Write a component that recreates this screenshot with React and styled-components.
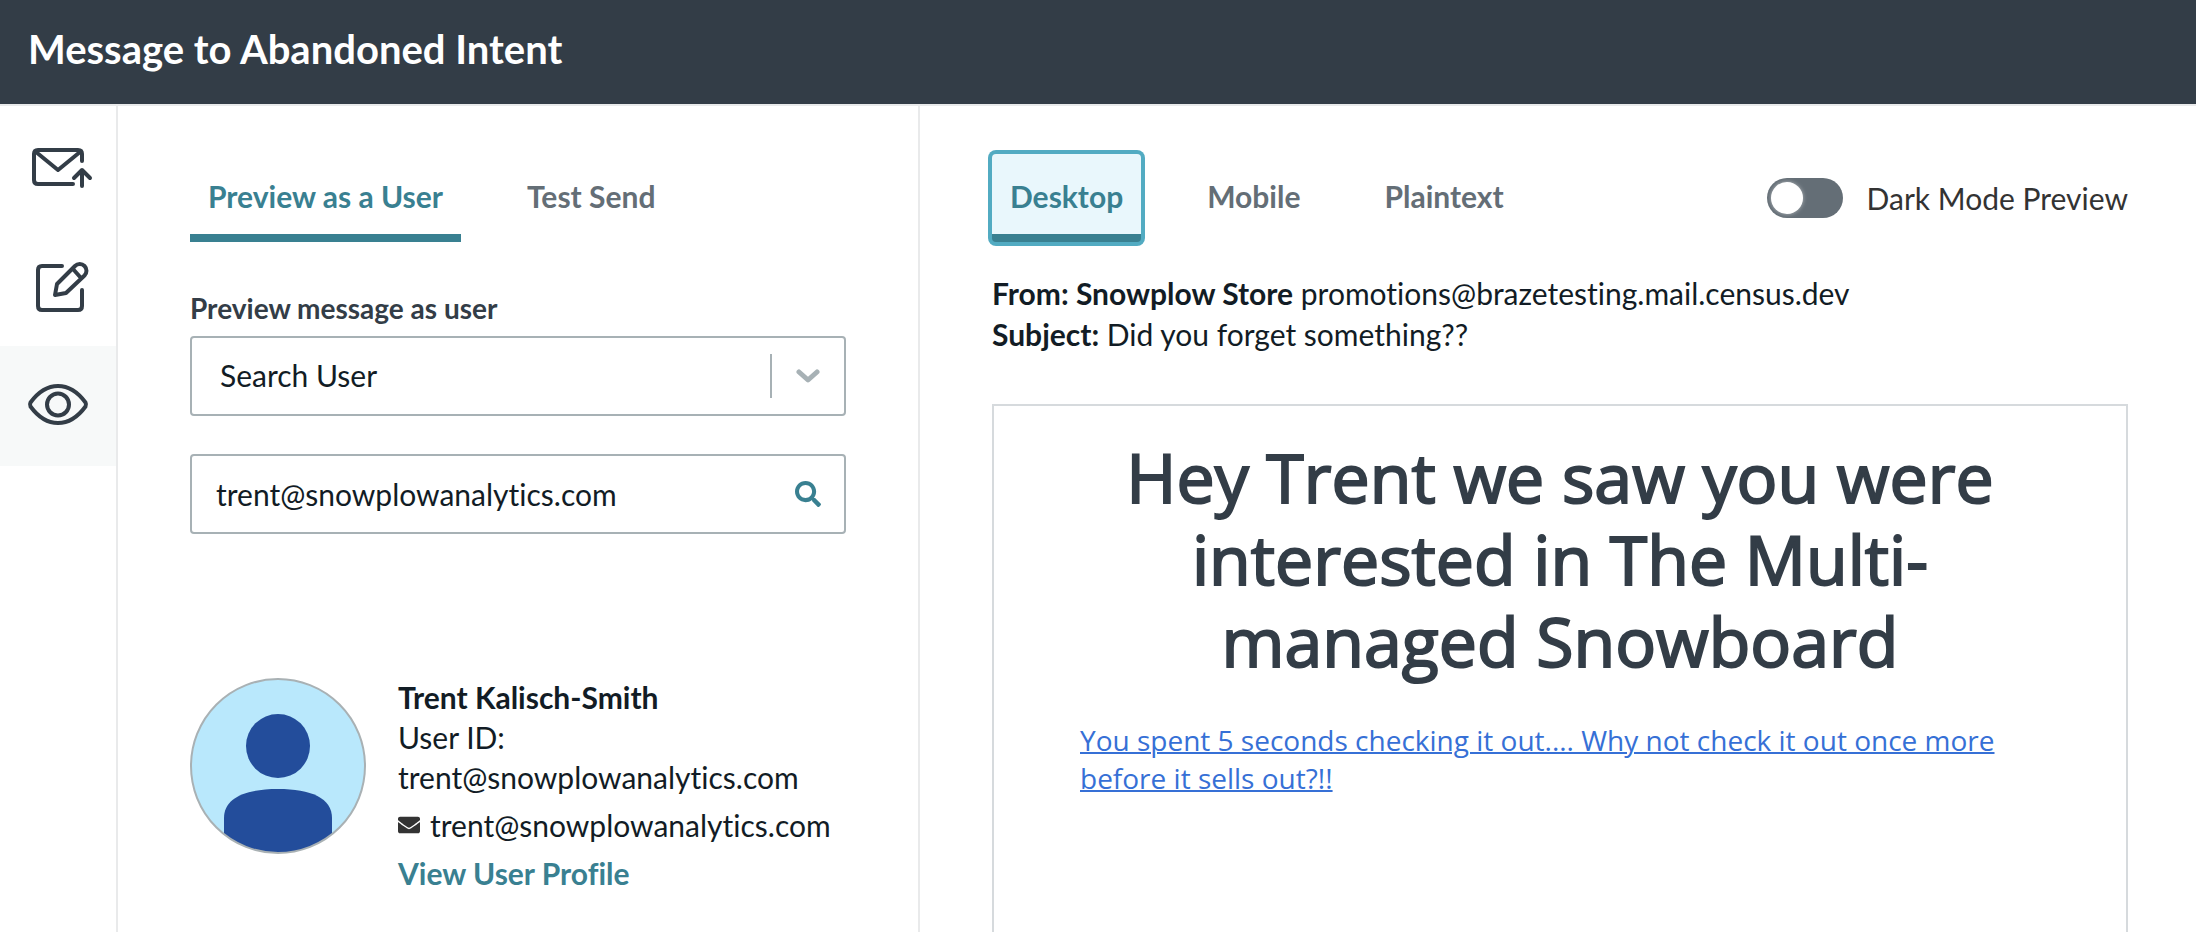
import React, { useState } from "react";
import styled, { createGlobalStyle, css } from "styled-components";
import { FaSearch, FaEnvelope } from "react-icons/fa";

const color = {
  ink: "#121c25",
  slate: "#333d47",
  grey: "#646e76",
  teal: "#398091",
  ring: "#52abc2",
  ringFill: "#e9f7fc",
  line: "#a7b1b5",
  divider: "#e9eaeb",
};

const GlobalStyle = createGlobalStyle`
  *, *::before, *::after { box-sizing: border-box; }
  body {
    margin: 0;
    background: #fff;
    color: ${color.ink};
    font-family: Lato, "Liberation Sans", sans-serif;
    font-size: 30px;
    font-variant-ligatures: none;
    line-height: 41px;
  }
  button, input, select { font: inherit; color: inherit; font-variant-ligatures: none; }
  h1, h2, p { margin: 0; }
`;

const Page = styled.div`
  display: flex;
  flex-direction: column;
  min-height: 100vh;
`;

const Header = styled.header`
  display: flex;
  align-items: center;
  height: 106px;
  padding: 0 28px 6px;
  background: ${color.slate};
  border-bottom: 2px solid ${color.divider};
`;

const Title = styled.h1`
  color: #fff;
  font-size: 40px;
  font-weight: 700;
  line-height: 48px;
`;

const Body = styled.div`
  flex: 1;
  display: grid;
  grid-template-columns: 118px 802px minmax(0, 1fr);
`;

const Rail = styled.nav`
  display: flex;
  flex-direction: column;
  border-right: 2px solid ${color.divider};
`;

const RailButton = styled.button`
  display: flex;
  align-items: center;
  justify-content: center;
  height: 120px;
  padding: 0;
  border: 0;
  background: ${(p) => (p.$active ? "#f7f9f9" : "transparent")};
  cursor: pointer;
`;

const RailIcon = styled.svg`
  width: 72px;
  height: 72px;
  fill: none;
  stroke: ${color.slate};
  stroke-width: 4;
  stroke-linecap: round;
  stroke-linejoin: round;
`;

const UserPanel = styled.section`
  padding: 48px 72px 32px;
  border-right: 2px solid ${color.divider};
`;

const PreviewPanel = styled.section`
  display: flex;
  flex-direction: column;
  padding: 48px 68px 0 72px;
`;

const TabBar = styled.div`
  display: flex;
  gap: 48px;
`;

const Tab = styled.button`
  height: 88px;
  padding: 0 18px 4px;
  border: 0;
  border-top: 8px solid transparent;
  border-bottom: 8px solid ${(p) => (p.$active ? color.teal : "transparent")};
  background: transparent;
  color: ${(p) => (p.$active ? color.teal : color.grey)};
  font-weight: 700;
  white-space: nowrap;
  cursor: pointer;
  ${(p) =>
    p.$ringed &&
    css`
      border-top-color: ${color.ringFill};
      border-radius: 4px;
      background: ${color.ringFill};
      box-shadow: 0 0 0 4px ${color.ring};
    `}
`;

const PreviewBar = styled.div`
  display: flex;
  align-items: center;
  justify-content: space-between;
`;

const SwitchLabel = styled.label`
  display: flex;
  align-items: center;
  gap: 24px;
  color: #333;
  cursor: pointer;
`;

const Switch = styled.input`
  appearance: none;
  display: flex;
  width: 76px;
  height: 40px;
  margin: 0;
  padding: 4px;
  border-radius: 20px;
  background: ${color.grey};
  cursor: pointer;
  &::before {
    content: "";
    width: 32px;
    height: 32px;
    border-radius: 50%;
    background: #fff;
    box-shadow: 0 0 4px rgba(255, 255, 255, 0.5);
  }
  &:checked {
    justify-content: flex-end;
    background: ${color.teal};
  }
`;

const FieldLabel = styled.label`
  display: block;
  margin-top: 47px;
  margin-bottom: 9px;
  color: ${color.slate};
  font-size: 28px;
  font-weight: 700;
  line-height: 38px;
`;

const Field = styled.div`
  display: flex;
  align-items: center;
  height: 80px;
  border: 2px solid ${color.line};
  border-radius: 4px;
  background: #fff;
  & + & {
    margin-top: 38px;
  }
`;

const UserSelect = styled.select`
  flex: 1;
  min-width: 0;
  height: 100%;
  padding: 0 28px 2px;
  border: 0;
  background: transparent;
  appearance: none;
  outline: none;
`;

const SelectArrow = styled.span`
  display: flex;
  align-items: center;
  justify-content: center;
  width: 74px;
  height: 44px;
  border-left: 2px solid ${color.line};
  svg {
    width: 24px;
    height: 14px;
    fill: none;
    stroke: ${color.line};
    stroke-width: 5;
    stroke-linecap: round;
    stroke-linejoin: round;
  }
`;

const UserInput = styled.input`
  flex: 1;
  min-width: 0;
  height: 100%;
  padding: 0 24px;
  border: 0;
  background: transparent;
  outline: none;
`;

const SearchButton = styled.button`
  display: flex;
  align-items: center;
  justify-content: center;
  width: 72px;
  height: 76px;
  padding: 0;
  border: 0;
  background: transparent;
  color: ${color.teal};
  font-size: 26px;
  cursor: pointer;
`;

const Profile = styled.div`
  display: flex;
  gap: 32px;
  margin-top: 144px;
`;

const Avatar = styled.svg`
  flex: none;
  width: 176px;
  height: 176px;
`;

const ProfileText = styled.div`
  display: flex;
  flex-direction: column;
  align-items: flex-start;
  gap: 8px;
  min-width: 0;
  margin-top: -1px;
  line-height: 40px;
  overflow-wrap: anywhere;
`;

const EmailRow = styled.p`
  display: flex;
  align-items: center;
  gap: 10px;
  svg {
    width: 22px;
    height: 22px;
    color: #333;
  }
`;

const ProfileLink = styled.a`
  color: ${color.teal};
  font-weight: 700;
  text-decoration: none;
`;

const Envelope = styled.div`
  margin-top: 31px;
`;

const Message = styled.article`
  flex: 1;
  margin-top: 49px;
  padding: 30px 86px;
  border: 2px solid #d6dadd;
  border-bottom: 0;
  font-family: "Open Sans", sans-serif;
`;

const Headline = styled.h2`
  color: ${color.slate};
  font-size: 68px;
  font-weight: 400;
  line-height: 82px;
  text-align: center;
  -webkit-text-stroke: 2px ${color.slate};
`;

const MessageLink = styled.a`
  display: block;
  margin-top: 39px;
  color: #3670d6;
  font-size: 28px;
  line-height: 38px;
  text-decoration: underline;
  text-decoration-thickness: 2px;
`;

const railItems = [
  {
    id: "send",
    label: "Sending info",
    art: (
      <>
        <path d="M60 31V24Q60 20 56 20H16Q12 20 12 24V50Q12 54 16 54H51" />
        <path d="M14 22L36 40L58 22M60 56V40M52 48L60 40L68 48" />
      </>
    ),
  },
  {
    id: "edit",
    label: "Edit",
    art: (
      <>
        <path d="M40 16H20Q16 16 16 20V56Q16 60 20 60H56Q60 60 60 56V40" />
        <path d="M33 45L35 34L53 16A6.5 6.5 0 0 1 62.500 25.500L44 43ZM51 19L59 28" />
      </>
    ),
  },
  {
    id: "preview",
    label: "Preview",
    art: (
      <>
        <path d="M8.500 32.500C14 25 23 16 36 16S58 25 63.500 32.500Q64.500 34.500 63.500 36.500C58 44 49 53 36 53S14 44 8.500 36.500Q7.500 34.500 8.500 32.500Z" />
        <circle cx="36" cy="34.500" r="11" />
      </>
    ),
  },
];

export default function App() {
  const [dark, setDark] = useState(false);
  const [user, setUser] = useState("trent@snowplowanalytics.com");

  return (
    <>
      <GlobalStyle />
      <Page>
        <Header>
          <Title>Message to Abandoned Intent</Title>
        </Header>
        <Body>
          <Rail>
            {railItems.map((item) => (
              <RailButton key={item.id} aria-label={item.label} $active={item.id === "preview"}>
                <RailIcon viewBox="0 0 72 72">{item.art}</RailIcon>
              </RailButton>
            ))}
          </Rail>

          <UserPanel>
            <TabBar>
              <Tab $active>Preview as a User</Tab>
              <Tab>Test Send</Tab>
            </TabBar>

            <FieldLabel htmlFor="preview-user">Preview message as user</FieldLabel>
            <Field>
              <UserSelect id="preview-user">
                <option>Search User</option>
              </UserSelect>
              <SelectArrow>
                <svg viewBox="0 0 24 14">
                  <path d="M3 3L12 11L21 3" />
                </svg>
              </SelectArrow>
            </Field>
            <Field>
              <UserInput
                aria-label="User ID or email"
                value={user}
                onChange={(e) => setUser(e.target.value)}
              />
              <SearchButton aria-label="Search">
                <FaSearch />
              </SearchButton>
            </Field>

            <Profile>
              <Avatar viewBox="0 0 176 176">
                <clipPath id="avatar-clip">
                  <circle cx="88" cy="88" r="87" />
                </clipPath>
                <circle cx="88" cy="88" r="87" fill="#b9e8fc" />
                <g fill="#234d9b" clipPath="url(#avatar-clip)">
                  <circle cx="88" cy="68" r="32" />
                  <path d="M34 176V140C34 120 55 111 88 111S142 120 142 140V176Z" />
                </g>
                <circle cx="88" cy="88" r="87" fill="none" stroke="#a9b1b4" strokeWidth="2" />
              </Avatar>
              <ProfileText>
                <p>
                  <strong>Trent Kalisch-Smith</strong>
                  <br />
                  User ID: trent@snowplowanalytics.com
                </p>
                <EmailRow>
                  <FaEnvelope />
                  trent@snowplowanalytics.com
                </EmailRow>
                <ProfileLink href="#profile">View User Profile</ProfileLink>
              </ProfileText>
            </Profile>
          </UserPanel>

          <PreviewPanel>
            <PreviewBar>
              <TabBar>
                <Tab $active $ringed>Desktop</Tab>
                <Tab>Mobile</Tab>
                <Tab>Plaintext</Tab>
              </TabBar>
              <SwitchLabel>
                <Switch
                  type="checkbox"
                  role="switch"
                  checked={dark}
                  onChange={(e) => setDark(e.target.checked)}
                />
                Dark Mode Preview
              </SwitchLabel>
            </PreviewBar>

            <Envelope>
              <p>
                <strong>From: Snowplow Store</strong> promotions@brazetesting.mail.census.dev
              </p>
              <p>
                <strong>Subject:</strong> Did you forget something??
              </p>
            </Envelope>

            <Message>
              <Headline>Hey Trent we saw you were interested in The Multi-managed Snowboard</Headline>
              <MessageLink href="#product">
                You spent 5 seconds checking it out.... Why not check it out once more before it
                sells out?!!
              </MessageLink>
            </Message>
          </PreviewPanel>
        </Body>
      </Page>
    </>
  );
}
